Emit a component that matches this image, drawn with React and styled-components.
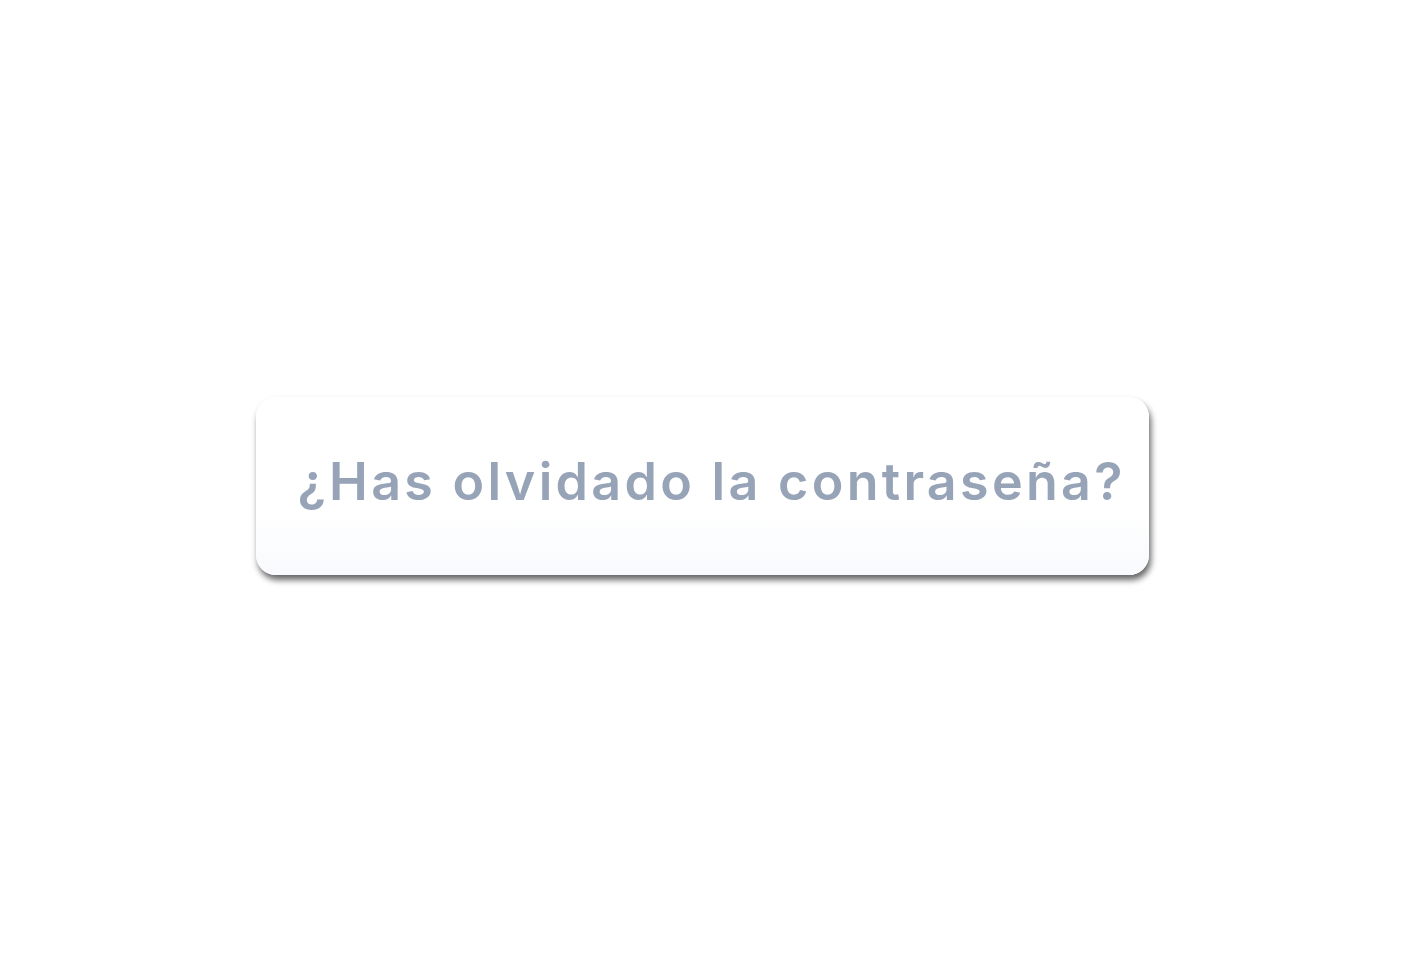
import styled, { createGlobalStyle } from "styled-components";

const GlobalStyle = createGlobalStyle`
  html, body {
    margin: 0;
    padding: 0;
    background: #ffffff;
  }
`;

const Page = styled.div`
  min-height: 961px;
  display: flex;
  justify-content: center;
  align-items: center;
  padding-top: 11px;
  box-sizing: border-box;
`;

const Card = styled.div`
  width: 893px;
  height: 178px;
  box-sizing: border-box;
  border-radius: 20px;
  background: linear-gradient(180deg, #ffffff 0%, #ffffff 65%, #f8fafd 100%);
  box-shadow: 2px 5px 6px rgba(0, 0, 0, 0.6);
  display: flex;
  align-items: center;
  padding: 0 0 10px 42px;
`;

const ForgotLink = styled.a`
  font-family: Inter, "Noto Sans", sans-serif;
  font-weight: 600;
  font-size: 52px;
  letter-spacing: 3.3px;
  color: #97a3b7;
  text-decoration: none;
  cursor: pointer;
`;

export default function App() {
  return (
    <>
      <GlobalStyle />
      <Page>
        <Card>
          <ForgotLink>¿Has olvidado la contraseña?</ForgotLink>
        </Card>
      </Page>
    </>
  );
}
